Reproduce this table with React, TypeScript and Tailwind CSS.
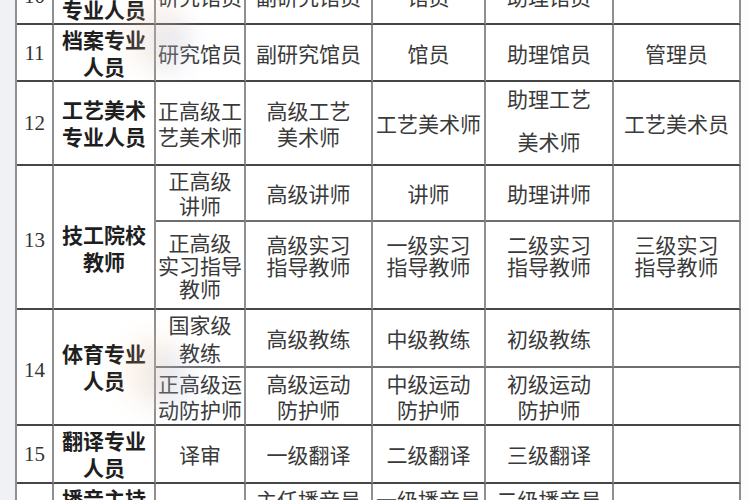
import React from "react";

type Cell = { text?: string[]; rows?: number; bold?: boolean; num?: boolean; pad?: string; lead?: string; gap?: string };
type Row = { h: string; minor?: boolean; cells: Cell[] };

const rows: Row[] = [
  {
    h: "h-[57px]",
    cells: [
      { text: ["10"], num: true },
      { text: ["文物博物", "专业人员"], bold: true },
      { text: ["研究馆员"] },
      { text: ["副研究馆员"] },
      { text: ["馆员"] },
      { text: ["助理馆员"] },
      {},
    ],
  },
  {
    h: "h-[57px]",
    cells: [
      { text: ["11"], num: true },
      { text: ["档案专业", "人员"], bold: true },
      { text: ["研究馆员"] },
      { text: ["副研究馆员"] },
      { text: ["馆员"] },
      { text: ["助理馆员"] },
      { text: ["管理员"] },
    ],
  },
  {
    h: "h-[84px]",
    cells: [
      { text: ["12"], num: true },
      { text: ["工艺美术", "专业人员"], bold: true },
      { text: ["正高级工", "艺美术师"] },
      { text: ["高级工艺", "美术师"] },
      { text: ["工艺美术师"] },
      { text: ["助理工艺", "美术师"], gap: "mb-[17px]", pad: "pb-[8px]" },
      { text: ["工艺美术员"] },
    ],
  },
  {
    h: "h-[56px]",
    minor: true,
    cells: [
      { text: ["13"], num: true, rows: 2, pad: "pt-[6px]" },
      { text: ["技工院校", "教师"], bold: true, rows: 2, pad: "pt-[22px]" },
      { text: ["正高级", "讲师"], lead: "leading-[25px]" },
      { text: ["高级讲师"] },
      { text: ["讲师"] },
      { text: ["助理讲师"] },
      {},
    ],
  },
  {
    h: "h-[88px]",
    cells: [
      { text: ["正高级", "实习指导", "教师"], lead: "leading-[23px]" },
      { text: ["高级实习", "指导教师"], lead: "leading-[22px]", pad: "pb-[20px]" },
      { text: ["一级实习", "指导教师"], lead: "leading-[22px]", pad: "pb-[20px]" },
      { text: ["二级实习", "指导教师"], lead: "leading-[22px]", pad: "pb-[20px]" },
      { text: ["三级实习", "指导教师"], lead: "leading-[22px]", pad: "pb-[20px]" },
    ],
  },
  {
    h: "h-[58px]",
    minor: true,
    cells: [
      { text: ["14"], num: true, rows: 2, pad: "pt-[6px]" },
      { text: ["体育专业", "人员"], bold: true, rows: 2 },
      { text: ["国家级", "教练"], lead: "leading-[28px]" },
      { text: ["高级教练"] },
      { text: ["中级教练"] },
      { text: ["初级教练"] },
      {},
    ],
  },
  {
    h: "h-[58px]",
    cells: [
      { text: ["正高级运", "动防护师"] },
      { text: ["高级运动", "防护师"] },
      { text: ["中级运动", "防护师"] },
      { text: ["初级运动", "防护师"] },
      {},
    ],
  },
  {
    h: "h-[58px]",
    cells: [
      { text: ["15"], num: true },
      { text: ["翻译专业", "人员"], bold: true },
      { text: ["译审"] },
      { text: ["一级翻译"] },
      { text: ["二级翻译"] },
      { text: ["三级翻译"] },
      {},
    ],
  },
  {
    h: "h-[58px]",
    cells: [
      { text: ["16"], num: true },
      { text: ["播音主持", "专业人员"], bold: true },
      { text: ["播音指导"] },
      { text: ["主任播音员", "主任主持人"] },
      { text: ["一级播音员", "一级主持人"] },
      { text: ["二级播音员", "二级主持人"] },
      { text: ["三级播音员"] },
    ],
  },
];

export default function App() {
  return (
    <div className="relative flex h-[500px] w-[750px] overflow-hidden bg-[#fcfcfc] font-['Noto_Sans_CJK_SC',sans-serif]">
      <div className="w-[15px] shrink-0 bg-[#eff1f4]" />
      <div className="shrink-0">
        <table className="-mt-[32px] w-[726px] table-fixed border-separate border-spacing-0 border-l-2 border-l-[#8f8f8f] bg-white">
          <colgroup>
            <col className="w-[37px]" />
            <col className="w-[102px]" />
            <col className="w-[90px]" />
            <col className="w-[127px]" />
            <col className="w-[113px]" />
            <col className="w-[128px]" />
            <col className="w-[127px]" />
          </colgroup>
          <tbody>
            {rows.map((row, ri) => (
              <tr key={ri} className={row.h}>
                {row.cells.map((c, ci) => {
                  const spans = (c.rows ?? 1) > 1;
                  const bottom = row.minor && !spans ? "border-b-[#6e6e6e]" : "border-b-[#464646]";
                  const font = c.num
                    ? "font-['Liberation_Serif',serif] text-[21px] text-[#333]"
                    : c.bold
                    ? "font-bold text-[21px] text-[#1e1e1e]"
                    : "text-[21px] text-[#3a3a3a]";
                  return (
                    <td
                      key={ci}
                      rowSpan={c.rows}
                      className={`border-r-2 border-b-2 border-r-[#8f8f8f] p-0 text-center align-middle whitespace-nowrap ${bottom} ${font} ${c.pad ?? ""} ${c.lead ?? (c.bold ? "leading-[27px]" : "leading-[26px]")}`}
                    >
                      {c.text?.map((t, i) => (
                        <div key={i} className={i === 0 ? c.gap : undefined}>
                          {t}
                        </div>
                      ))}
                    </td>
                  );
                })}
              </tr>
            ))}
          </tbody>
        </table>
      </div>
      {/* faint watermark smudges */}
      <div className="pointer-events-none absolute left-[125px] top-[0px] h-[70px] w-[60px] rounded-full bg-[#f3c9a8] opacity-20 blur-md" />
      <div className="pointer-events-none absolute left-[150px] top-[20px] h-[50px] w-[40px] rounded-full bg-[#9fb8e6] opacity-20 blur-md" />
      <div className="pointer-events-none absolute left-[125px] top-[335px] h-[70px] w-[50px] rounded-full bg-[#f3c08e] opacity-20 blur-md" />
      <div className="pointer-events-none absolute left-[150px] top-[350px] h-[60px] w-[40px] rounded-full bg-[#9fb8e6] opacity-20 blur-md" />
    </div>
  );
}
